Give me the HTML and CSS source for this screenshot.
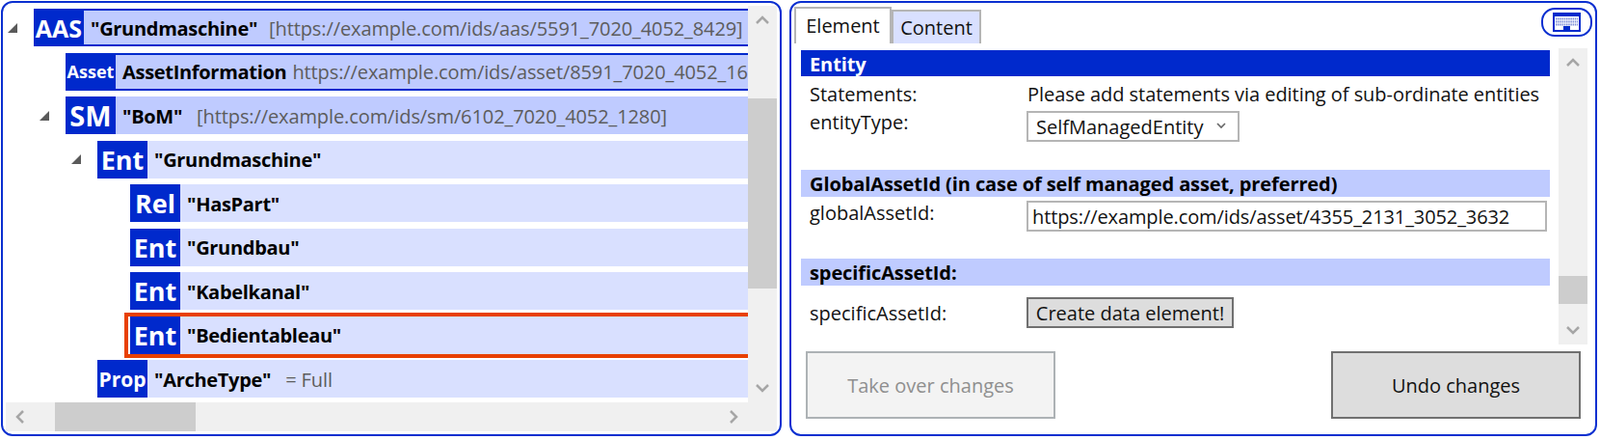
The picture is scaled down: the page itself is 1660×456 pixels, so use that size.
FILE: index.html
```html
<!DOCTYPE html>
<html lang="en">
<head>
    <meta charset="UTF-8">
    <title>Entity editor</title>
    <link rel="stylesheet" href="styles.css">
</head>
<body>
    <div class="app">
        <section class="panel tree-panel">
            <div class="tree-view">
                <div class="tree-row level-0 strong framed">
                    <svg class="expander" viewBox="0 0 10 10"><polygon points="10,0 10,10 0,10"/></svg>
                    <span class="badge badge-aas">AAS</span>
                    <span class="info"><b>"Grundmaschine"</b><i class="wide">[https://example.com/ids/aas/5591_7020_4052_8429]</i></span>
                </div>
                <div class="tree-row level-1 strong framed">
                    <span class="no-expander"></span>
                    <span class="badge badge-small">Asset</span>
                    <span class="info"><b>AssetInformation</b><i>https://example.com/ids/asset/8591_7020_4052_1680</i></span>
                </div>
                <div class="tree-row level-1 strong">
                    <svg class="expander" viewBox="0 0 10 10"><polygon points="10,0 10,10 0,10"/></svg>
                    <span class="badge badge-sm">SM</span>
                    <span class="info"><b>"BoM"</b><i class="wide">[https://example.com/ids/sm/6102_7020_4052_1280]</i></span>
                </div>
                <div class="tree-row level-2">
                    <svg class="expander" viewBox="0 0 10 10"><polygon points="10,0 10,10 0,10"/></svg>
                    <span class="badge">Ent</span>
                    <span class="info"><b>"Grundmaschine"</b></span>
                </div>
                <div class="tree-row level-3">
                    <span class="no-expander"></span>
                    <span class="badge">Rel</span>
                    <span class="info"><b>"HasPart"</b></span>
                </div>
                <div class="tree-row level-3">
                    <span class="no-expander"></span>
                    <span class="badge">Ent</span>
                    <span class="info"><b>"Grundbau"</b></span>
                </div>
                <div class="tree-row level-3">
                    <span class="no-expander"></span>
                    <span class="badge">Ent</span>
                    <span class="info"><b>"Kabelkanal"</b></span>
                </div>
                <div class="tree-row level-3 selected">
                    <span class="no-expander"></span>
                    <span class="badge">Ent</span>
                    <span class="info"><b>"Bedientableau"</b></span>
                </div>
                <div class="tree-row level-2">
                    <span class="no-expander"></span>
                    <span class="badge badge-prop">Prop</span>
                    <span class="info"><b>"ArcheType"</b><i class="wide">= Full</i></span>
                </div>
            </div>
            <div class="scrollbar vertical tree-v">
                <svg class="arrow" viewBox="0 0 30 30"><polyline points="9,18 15,12 21,18"/></svg>
                <div class="thumb"></div>
                <svg class="arrow" viewBox="0 0 30 30"><polyline points="9,12 15,18 21,12"/></svg>
            </div>
            <div class="scrollbar horizontal">
                <svg class="arrow" viewBox="0 0 30 30"><polyline points="18,9 12,15 18,21"/></svg>
                <div class="thumb"></div>
                <svg class="arrow" viewBox="0 0 30 30"><polyline points="12,9 18,15 12,21"/></svg>
            </div>
            <div class="scroll-corner"></div>
        </section>

        <section class="panel edit-panel">
            <div class="tab-bar">
                <div class="tab active">Element</div>
                <div class="tab">Content</div>
                <button class="keyboard-btn">
                    <svg viewBox="0 0 29 20" width="29" height="20">
                        <rect x="1" y="1" width="27" height="18" fill="#fff" stroke="#002bcc" stroke-width="2"/>
                        <rect x="1" y="1" width="27" height="3" fill="#002bcc"/>
                        <path d="M3 6.5h23M3 9.5h23M3 12.5h23" stroke="#7f8fd8" stroke-width="2" stroke-dasharray="1.5 .7"/>
                        <rect x="11" y="14" width="7" height="5" fill="#002bcc"/>
                    </svg>
                </button>
            </div>
            <div class="edit-body">
                <div class="form">
                    <h2 class="section section-main">Entity</h2>
                    <div class="field field-statements">
                        <span class="label">Statements:</span>
                        <span class="plain-value">Please add statements via editing of sub-ordinate entities</span>
                    </div>
                    <div class="field field-type">
                        <span class="label">entityType:</span>
                        <div class="select">
                            <span>SelfManagedEntity</span>
                            <svg viewBox="0 0 12 8" width="12" height="8"><polyline points="2,1 6,5 10,1"/></svg>
                        </div>
                    </div>
                    <h2 class="section">GlobalAssetId (in case of self managed asset, preferred)</h2>
                    <div class="field field-global">
                        <span class="label">globalAssetId:</span>
                        <div class="text-input">https://example.com/ids/asset/4355_2131_3052_3632</div>
                    </div>
                    <h2 class="section">specificAssetId:</h2>
                    <div class="field field-specific">
                        <span class="label">specificAssetId:</span>
                        <button class="create-btn">Create data element!</button>
                    </div>
                </div>
                <div class="scrollbar vertical edit-v">
                    <svg class="arrow" viewBox="0 0 30 30"><polyline points="9,18 15,12 21,18"/></svg>
                    <div class="thumb"></div>
                    <svg class="arrow" viewBox="0 0 30 30"><polyline points="9,12 15,18 21,12"/></svg>
                </div>
            </div>
            <div class="actions">
                <button class="big-btn disabled">Take over changes</button>
                <button class="big-btn">Undo changes</button>
            </div>
        </section>
    </div>
</body>
</html>
```

FILE: styles.css
```css
* {
    box-sizing: border-box;
}

body {
    margin: 0;
    padding: 1px 3px 0 1px;
    background: #fff;
    font-family: "Open Sans", "Noto Sans", sans-serif;
    font-size: 20px;
    color: #111;
}

.app {
    display: flex;
    gap: 8px;
    height: 451px;
}

.panel {
    border: 2px solid #0a2fd0;
    border-radius: 12px;
    overflow: hidden;
    background: #fff;
}

/* left side, the tree */

.tree-panel {
    width: 810px;
    display: grid;
    grid-template-columns: 770px 30px;
    grid-template-rows: 411px 30px;
    padding: 3px 0 0 3px;
}

.tree-view {
    overflow: hidden;
    padding-top: 3px;
}

.tree-row {
    display: flex;
    align-items: center;
    height: 39px;
    margin-bottom: 6.5px;
    white-space: nowrap;
    width: 770px;
}

.level-0 { padding-left: 2px; }
.level-1 { padding-left: 35px; }
.level-2 { padding-left: 68px; }
.level-3 { padding-left: 102px; }

.expander {
    width: 10px;
    height: 10px;
    margin-right: 17px;
    fill: #5a5a5a;
    flex: none;
}

.no-expander {
    width: 27px;
    flex: none;
}

.badge {
    flex: none;
    width: 52px;
    height: 100%;
    background: #0029cc;
    color: #fff;
    font-weight: 700;
    font-size: 27px;
    line-height: 40px;
    text-align: center;
}

.badge-aas {
    font-size: 25px;
}

.badge-sm {
    font-size: 29px;
}

.badge-prop {
    font-size: 21px;
}

.badge-small {
    font-size: 18px;
    line-height: 38px;
}

.info {
    flex: 1;
    min-width: 0;
    height: 100%;
    display: flex;
    align-items: center;
    padding: 1px 0 0 7px;
    background: #d9e0ff;
    overflow: hidden;
    letter-spacing: -0.1px;
}

.info b {
    color: #000;
    letter-spacing: -0.3px;
    flex: none;
}

.info i {
    flex: none;
    font-style: normal;
    color: #5c5c5c;
    margin-left: 6px;
}

.info i.wide {
    margin-left: 12px;
}

.level-1 .info i.wide,
.level-2 .info i.wide {
    margin-left: 15px;
}

.strong .info {
    background: #bfcbff;
}

.framed .info {
    border-top: 2px solid #0029cc;
    border-bottom: 2px solid #0029cc;
}

.tree-row.selected {
    position: relative;
    z-index: 0;
}

.tree-row.selected::before {
    content: "";
    position: absolute;
    left: 123px;
    right: 0;
    top: -4px;
    bottom: -4px;
    border: 4px solid #e84000;
    border-right: 0;
    z-index: 1;
    pointer-events: none;
}

/* scrollbars */

.scrollbar {
    display: flex;
    background: #f0f0f0;
}

.scrollbar .arrow {
    flex: none;
    width: 30px;
    height: 30px;
    fill: none;
    stroke: #a6a6a6;
    stroke-width: 2.5;
}

.thumb {
    background: #cdcdcd;
}

.vertical {
    flex-direction: column;
    width: 30px;
    justify-content: space-between;
}

.vertical .thumb {
    width: 100%;
}

.tree-v {
    grid-column: 2;
    grid-row: 1;
}

.tree-v .thumb {
    height: 197px;
    margin-top: 66px;
    margin-bottom: auto;
}

.horizontal {
    grid-column: 1;
    grid-row: 2;
    align-items: center;
    justify-content: space-between;
}

.horizontal .thumb {
    width: 146px;
    height: 100%;
    margin-left: 21px;
    margin-right: auto;
}

.scroll-corner {
    grid-column: 2;
    grid-row: 2;
    background: #f0f0f0;
}

/* right side, the editor */

.edit-panel {
    width: 838px;
    padding: 3px 0 0 3px;
}

.tab-bar {
    display: flex;
    align-items: flex-end;
    height: 39px;
}

.tab {
    height: 35px;
    padding-top: 3px;
    width: 93px;
    border: 2px solid #b5b5b5;
    border-bottom: 0;
    background: #d9e0ff;
    text-align: center;
}

.tab.active {
    height: 38px;
    width: 101px;
    padding-top: 4px;
    background: #fff;
}

.keyboard-btn {
    margin-left: auto;
    margin-right: 3px;
    align-self: flex-start;
    width: 53px;
    height: 30px;
    margin-top: 2px;
    padding: 0;
    display: flex;
    align-items: center;
    justify-content: center;
    border: 2px solid #0a2fd0;
    border-radius: 14px;
    background: #fff;
}

.edit-body {
    display: flex;
    margin-top: 5px;
    margin-left: 7px;
    height: 307px;
}

.form {
    width: 777px;
    padding-top: 2px;
}

.edit-v {
    margin-left: 9px;
    height: 307px;
}

.edit-v .thumb {
    height: 29px;
    margin-top: auto;
    margin-bottom: 12px;
}

.section {
    margin: 0;
    height: 28px;
    padding-left: 9px;
    font-size: 20px;
    line-height: 29px;
    font-weight: 700;
    letter-spacing: -0.1px;
    color: #000;
    background: #bfcbff;
}

.section-main {
    height: 27px;
    background: #0029cc;
    color: #fff;
}

.field {
    display: grid;
    grid-template-columns: 225px 1fr;
    padding-left: 9px;
    white-space: nowrap;
}

.plain-value {
    padding-left: 1px;
    letter-spacing: -0.05px;
}

.field-statements {
    height: 30px;
    padding-top: 5px;
}

.field-type {
    height: 67px;
    padding-top: 4px;
}

.field-global {
    height: 64px;
    padding-top: 4px;
}

.field-global .label {
    margin-top: -1px;
}

.field-specific {
    height: 44px;
    margin-top: 6px;
    align-items: center;
}

.select {
    display: flex;
    align-items: center;
    justify-content: space-between;
    width: 221px;
    height: 32px;
    margin-top: 2px;
    padding: 0 11px 0 8px;
    border: 2px solid #b5b5b5;
}

.select svg {
    fill: none;
    stroke: #666;
    stroke-width: 1.6;
}

.text-input {
    width: 540px;
    height: 32px;
    padding: 0 0 0 4px;
    line-height: 29px;
    letter-spacing: -0.1px;
    border: 2px solid #b5b5b5;
    overflow: hidden;
}

.create-btn {
    width: 215px;
    height: 32px;
    padding: 0;
    font: inherit;
    color: #111;
    background: #ddd;
    border: 2px solid #707070;
}

.actions {
    display: flex;
    justify-content: space-between;
    margin-top: 7px;
    padding: 0 15px 0 12px;
}

.big-btn {
    width: 259px;
    height: 70px;
    font: inherit;
    color: #111;
    background: #ddd;
    border: 2px solid #707070;
}

.big-btn.disabled {
    color: #8f8f8f;
    background: #f3f3f3;
    border-color: #adb2b5;
}
```
